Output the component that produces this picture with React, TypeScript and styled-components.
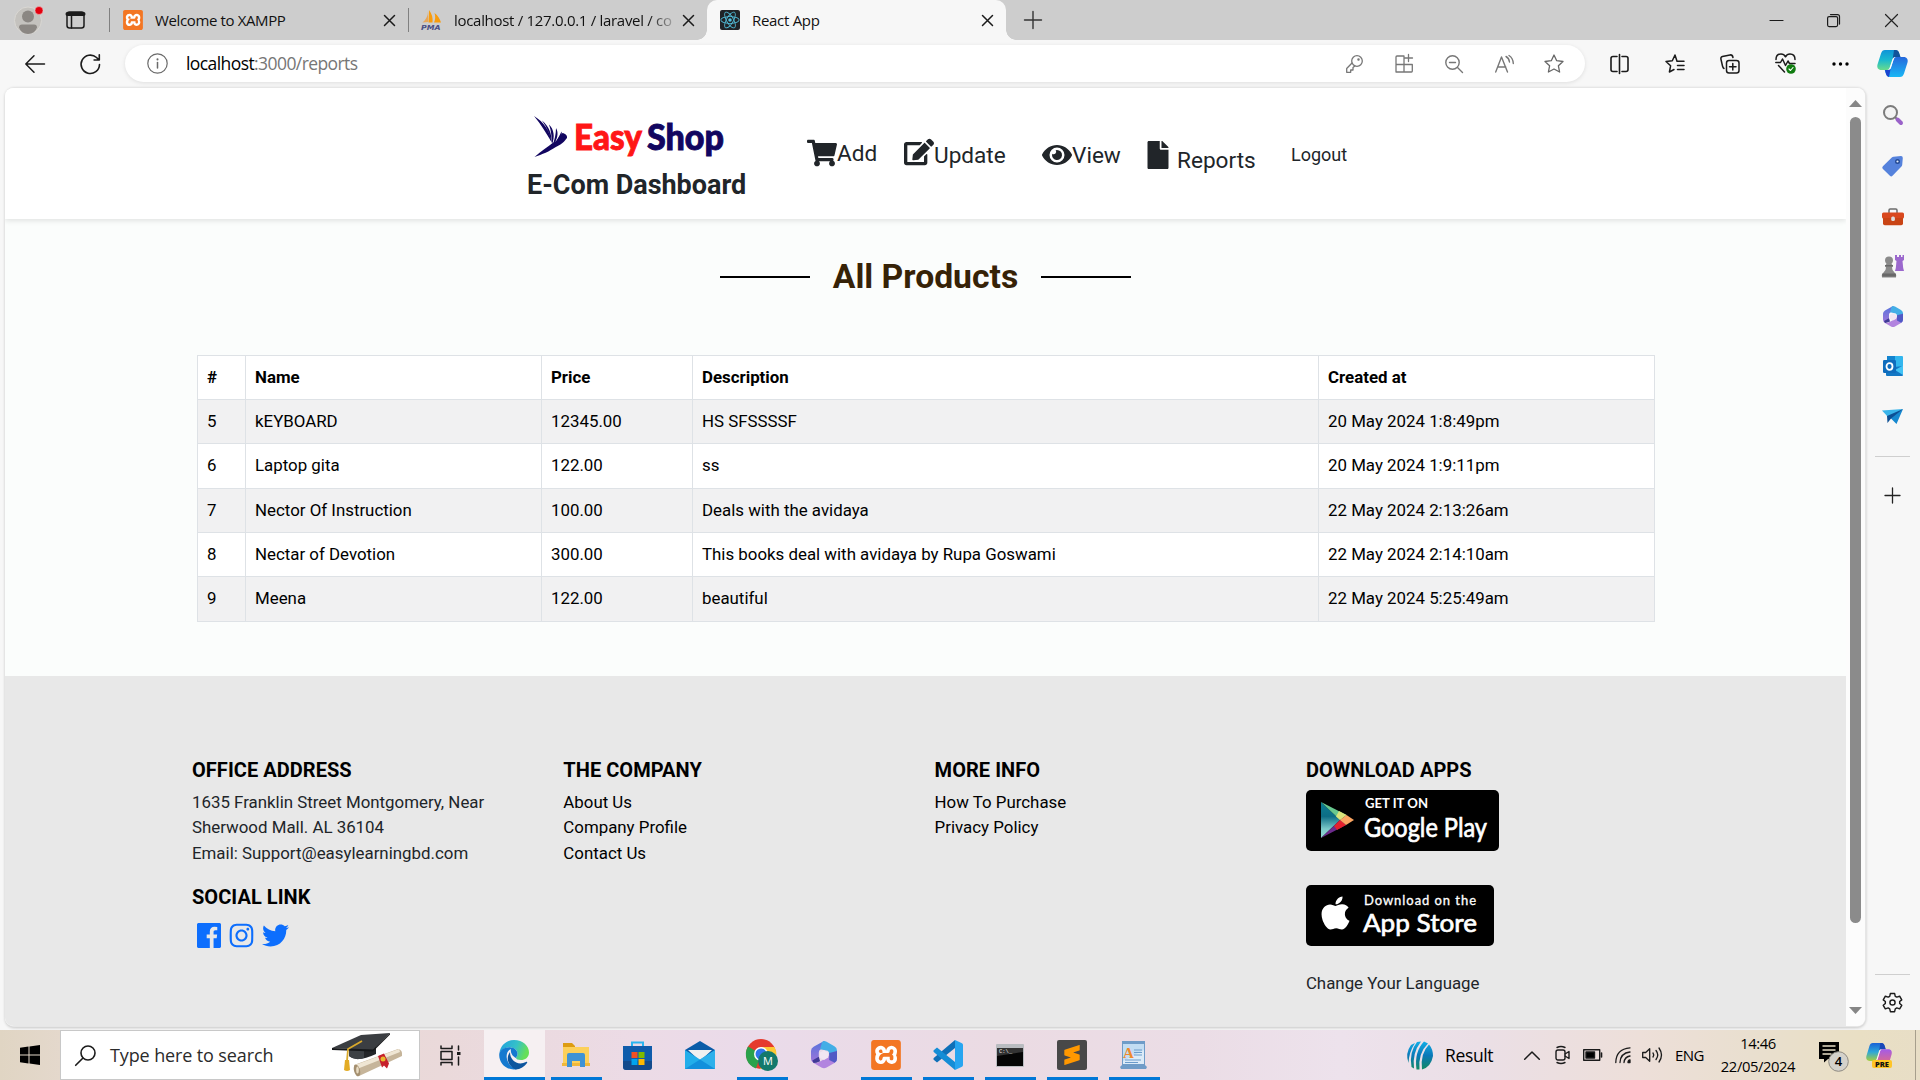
import React from "react";
import styled, { createGlobalStyle } from "styled-components";
import { FaShoppingCart, FaEdit, FaEye, FaFile, FaInstagram, FaTwitter, FaReact, FaApple } from "react-icons/fa";
import { SiXampp, SiSublimetext } from "react-icons/si";

const ui = `"Open Sans", "Noto Sans", sans-serif`;

const Global = createGlobalStyle`
  * { box-sizing: border-box; }
  body { margin: 0; background: #f7f7f7; overflow: hidden; font-family: Roboto, sans-serif; }
  svg { display: block; flex: none; overflow: visible; }
`;

const Screen = styled.div`
  width: 1920px;
  height: 1080px;
  display: flex;
  flex-direction: column;
  overflow: hidden;
  background: #f7f7f7;
`;

/* browser chrome */
const TabStrip = styled.div`
  height: 40px;
  display: flex;
  align-items: center;
  background: #cdcdcd;
`;
const Slot = styled.div<{ w: number; pl?: number; dy?: number }>`
  width: ${(p) => p.w}px;
  flex: none;
  display: flex;
  align-items: center;
  padding-left: ${(p) => p.pl || 0}px;
  margin-top: ${(p) => p.dy || 0}px;
`;
const Tab = styled.div<{ w: number; active?: boolean; pl?: number }>`
  width: ${(p) => p.w}px;
  height: 40px;
  flex: none;
  display: flex;
  align-items: center;
  padding: 0 13px 0 ${(p) => p.pl || 13}px;
  position: relative;
  background: ${(p) => (p.active ? "#f7f7f7" : "transparent")};
  border-radius: 10px 10px 0 0;
  &::before, &::after {
    content: "";
    display: ${(p) => (p.active ? "block" : "none")};
    position: absolute;
    bottom: 0;
    width: 10px;
    height: 10px;
  }
  &::before { left: -10px; background: radial-gradient(circle at 0 0, transparent 9.5px, #f7f7f7 10px); }
  &::after { right: -10px; background: radial-gradient(circle at 100% 0, transparent 9.5px, #f7f7f7 10px); }
`;
const TabTitle = styled.span<{ ls: number; fade?: boolean }>`
  flex: 1;
  min-width: 0;
  margin: -1px 8px 0 12px;
  white-space: nowrap;
  font: 15px/24px ${ui};
  letter-spacing: ${(p) => p.ls}px;
  color: #111;
  mask-image: ${(p) => (p.fade ? "linear-gradient(90deg, #000 88%, transparent 102%)" : "none")};
`;
const Divider = styled.div`
  width: 1px;
  height: 24px;
  background: #808080;
`;
const Spacer = styled.div`flex: 1;`;

const Toolbar = styled.div`
  height: 47px;
  display: flex;
  align-items: center;
`;
const AddressBar = styled.div`
  width: 1460px;
  height: 37px;
  border-radius: 19px;
  background: #fff;
  box-shadow: 0 1px 4px rgba(0, 0, 0, 0.1);
  display: flex;
  align-items: center;
  padding-left: 22px;
`;
const Url = styled.div`
  margin: -1px 0 0 18px;
  width: 1160px;
  font: 17.5px/24px ${ui};
  letter-spacing: -0.58px;
  color: #767676;
  b { font-weight: 400; color: #000; }
`;

const Middle = styled.div`
  display: flex;
  height: 943px;
  padding-left: 5px;
`;
const Frame = styled.div`
  width: 1861px;
  height: 940px;
  display: flex;
  border-radius: 9px;
  overflow: hidden;
  border: 1px solid #e6e6e6;
  border-width: 1px 1px 1px 0;
  box-shadow: 0 1px 3px rgba(0, 0, 0, 0.2);
  background: #fcfcfc;
`;
const Page = styled.div`
  width: 1841px;
  display: flex;
  flex-direction: column;
  background: #fbfdfc;
`;
const Scrollbar = styled.div`
  flex: 1;
  display: flex;
  flex-direction: column;
  align-items: center;
  background: #fcfcfc;
  padding: 12px 0 12px;
  justify-content: space-between;
`;
const Thumb = styled.div`
  width: 11px;
  height: 806px;
  margin-bottom: 75px;
  border-radius: 6px;
  background: #8b8b8b;
`;

/* site header */
const Header = styled.header`
  height: 131px;
  flex: none;
  display: flex;
  align-items: flex-start;
  padding-left: 522px;
  background: #fff;
  box-shadow: 0 2px 5px rgba(0, 0, 0, 0.1);
`;
const Brand = styled.div`
  width: 280px;
  padding-top: 28px;
`;
const BrandTitle = styled.div`
  margin-top: 9px;
  font: 700 27px/32px Roboto, sans-serif;
  letter-spacing: -0.02px;
  white-space: nowrap;
  color: #212529;
`;
const NavLink = styled.div<{ w: number; top: number }>`
  width: ${(p) => p.w}px;
  flex: none;
  padding-top: ${(p) => p.top}px;
  display: flex;
  align-items: flex-start;
  color: #212529;
`;
const NavText = styled.span<{ top?: number; ml?: number; size?: number }>`
  margin: ${(p) => p.top || 0}px 0 0 ${(p) => p.ml || 0}px;
  font-size: ${(p) => p.size || 22.6}px;
  line-height: 28px;
`;

const Title = styled.div`
  display: flex;
  justify-content: center;
  align-items: center;
  gap: 23px;
  margin-top: 35px;
  height: 46px;
`;
const Rule = styled.div`
  width: 90px;
  height: 2px;
  background: #000;
`;
const H1 = styled.h1`
  margin: 0;
  font: 700 33.7px/46px Roboto, sans-serif;
  color: #362207;
`;

const Table = styled.table`
  margin: 55px 0 0 192px;
  width: 1458px;
  table-layout: fixed;
  border-collapse: collapse;
  background: #fff;
  color: #000;
  font-size: 16.86px;
`;
const Row = styled.tr<{ h: number; striped?: boolean }>`
  height: ${(p) => p.h}px;
  background: ${(p) => (p.striped ? "#f1f1f2" : "#fff")};
`;
const Cell = styled.td`
  border: 1px solid #dee2e6;
  padding: 0 9px 2px;
  line-height: 24px;
  font-weight: inherit;
  white-space: nowrap;
  thead & { font-weight: 700; }
`;

const Footer = styled.footer`
  flex: 1;
  margin-top: 54px;
  padding: 82px 0 0 187px;
  display: grid;
  grid-template-columns: repeat(4, 371.3px);
  background: #e8e8e8;
  align-content: start;
`;
const FootHead = styled.h5`
  margin: 0 0 8px;
  font: 700 20px/24px Roboto, sans-serif;
  letter-spacing: 0.05px;
  white-space: nowrap;
  color: #000;
`;
const FootText = styled.div<{ dark?: boolean }>`
  font-size: 16.86px;
  line-height: 25.4px;
  white-space: nowrap;
  color: ${(p) => (p.dark ? "#000" : "#212529")};
`;
const Gap = styled.div<{ h: number }>`height: ${(p) => p.h}px;`;
const Social = styled.div`
  display: flex;
  align-items: center;
  gap: 7px;
  padding-left: 5px;
  color: #0d6efd;
`;

/* edge sidebar */
const Side = styled.aside`
  flex: 1;
  display: flex;
  flex-direction: column;
  align-items: center;
  padding-right: 1px;
`;
const SideItem = styled.div<{ h: number }>`
  height: ${(p) => p.h}px;
  flex: none;
  display: flex;
  align-items: center;
  justify-content: center;
`;
const SideRule = styled.div`
  width: 35px;
  height: 1px;
  background: #cfcfcf;
`;

/* taskbar */
const Taskbar = styled.div`
  height: 50px;
  display: flex;
  align-items: center;
  background: linear-gradient(90deg, #e0d5c3 0, #e4d8cc 60px, #ead9da 440px, #ecdbe6 640px, #eadbea 760px, #ebdbe3 1000px, #ebdde6 1200px, #ede2ec 1340px, #ebdfe6 1480px, #eddfd9 1640px, #e9dfcf 1750px, #e9dfc4 1860px, #e8dec6 1920px);
`;
const SearchBox = styled.div`
  width: 360px;
  height: 50px;
  display: flex;
  align-items: center;
  padding-left: 14px;
  background: #fff;
  border: 1px solid #c8c8c8;
`;
const SearchText = styled.span`
  width: 222px;
  margin-left: 14px;
  font: 18px/24px ${ui};
  letter-spacing: -0.12px;
  white-space: nowrap;
  color: #2b2b2b;
`;
const TaskApp = styled.div<{ open?: boolean; active?: boolean }>`
  width: ${(p) => (p.active ? 61 : 51)}px;
  margin-right: ${(p) => (p.active ? 6 : 11)}px;
  padding-right: 2px;
  height: 50px;
  flex: none;
  display: flex;
  align-items: center;
  justify-content: center;
  background: ${(p) => (p.active ? "#f6f0f2" : "transparent")};
  border-bottom: 3px solid ${(p) => (p.open ? "#0078d7" : "transparent")};
  border-top: 3px solid ${(p) => (p.active ? "#f6f0f2" : "transparent")};
`;
const TrayText = styled.span<{ size: number; ls: number }>`
  font: ${(p) => p.size}px/24px ${ui};
  letter-spacing: ${(p) => p.ls}px;
  white-space: nowrap;
  color: #000;
`;
const Clock = styled.div`
  width: 96px;
  text-align: center;
  font: 14.8px/22.5px ${ui};
  letter-spacing: -0.42px;
  margin-top: -1px;
  color: #000;
`;

type IconProps = { w: number; h: number; vb?: string; sw?: number; c?: string; children: React.ReactNode };
const Line = ({ w, h, vb, sw = 1.4, c = "#1b1b1b", children }: IconProps) => (
  <svg width={w} height={h} viewBox={vb || `0 0 ${w} ${h}`} fill="none" stroke={c} strokeWidth={sw} strokeLinecap="round" strokeLinejoin="round">
    {children}
  </svg>
);
const Close = ({ s = 11 }: { s?: number }) => (
  <Line w={s} h={s} vb="0 0 11 11" sw={1.5}><path d="M.5.5l10 10M10.500.5l-10 10" /></Line>
);

const Xampp = ({ s, h }: { s: number; h?: number }) => (
  <svg width={s} height={h || s} viewBox="0 0 24 24" preserveAspectRatio="none">
    <rect x="1" y="1" width="22" height="22" rx="2" fill="#fff" />
    <SiXampp size={24} color="#f37623" />
  </svg>
);

const Pma = () => (
  <svg width="21" height="20" viewBox="0 0 21 20">
    <path d="M7 1.500C7 6 5 9.500 1.500 12.500L7 12z" fill="#e8a75a" />
    <path d="M8 0c3 4 4 8 3.500 12.500L7.500 12.500z" fill="#f89c0e" />
    <path d="M13.500 3c3.500 2.500 5.500 6 6.500 9.500H13c1.500-3 1.500-6.500.5-9.500z" fill="#f89c0e" />
    <text x="0" y="19.500" fontFamily="DejaVu Sans, sans-serif" fontWeight="700" fontStyle="italic" fontSize="7" textLength="19.500" lengthAdjust="spacingAndGlyphs" fill="#4a4f86">PMA</text>
  </svg>
);

const Copilot = ({ pre }: { pre?: boolean }) => {
  const k = pre ? "p" : "c";
  return (
    <svg width={pre ? 26 : 31} height={pre ? 25 : 27} viewBox={pre ? "0 0 26 25" : "0 0 31 27"}>
      <defs>
        <linearGradient id={k + "1"} x1="0" y1="0" x2="0" y2="1">
          <stop offset="0" stopColor={pre ? "#1a62d6" : "#0f94d8"} />
          <stop offset=".5" stopColor={pre ? "#2da7d8" : "#1ab9cf"} />
          <stop offset="1" stopColor={pre ? "#a8cf3c" : "#69dc8c"} />
        </linearGradient>
        <linearGradient id={k + "2"} x1="0" y1="0" x2="0" y2="1">
          <stop offset="0" stopColor={pre ? "#a35be8" : "#2568dc"} />
          <stop offset="1" stopColor={pre ? "#f3706a" : "#1ab8f5"} />
        </linearGradient>
      </defs>
      <g transform={pre ? "scale(.84 .9)" : undefined}>
        <path d="M8 0h10c2.500 0 3.500 1.500 4.300 4l1 3h-5c-2 0-2.600 1-3 2.500l-2.600 8C12 19.500 11 20 9 20H4.500C1 20-.3 17.500.5 14.500L4 3.500C4.800 1 6 0 8 0z" fill={`url(#${k}1)`} />
        <path d="M17 0h1.500c2.500 0 3.300 1.500 4 4l1 3h-5c-1.500 0-2.400.8-2.800 2z" fill={pre ? "#1947b8" : "#12539a"} />
        <path d="M23 27H13c-2.500 0-3.500-1.500-4.300-4l-1-3H10c2 0 3.200-.6 3.800-2.500l2.600-8C17 7.500 18 7 20 7h6.500c3.500 0 4.800 2.500 4 5.500L27 23.500c-.8 2.500-2 3.500-4 3.500z" fill={`url(#${k}2)`} />
        <path d="M8 20h2.500c1.700 0 2.700-.7 3.300-2.300L12 27c-2-.2-2.600-1.700-3.300-4z" fill={pre ? "#ffc41f" : "#1b44cf"} />
        <path d="M12.800 18l3-8.500c.4-1.500 1-2.500 2.800-2.500-1 .6-1.500 1.300-1.900 2.500l-2.600 8C13.600 19.300 12.500 20 11 20c1 0 1.500-1 1.800-2z" fill="#fff" />
      </g>
      {pre && (
        <>
          <rect x="6" y="17" width="20" height="8" rx="2" fill="#ffc526" />
          <text x="9" y="23.700" fontFamily="Open Sans, sans-serif" fontWeight="800" fontSize="7.500" textLength="14" lengthAdjust="spacingAndGlyphs" fill="#111">PRE</text>
        </>
      )}
    </svg>
  );
};

const M365 = ({ s, id }: { s: number; id: string }) => (
  <svg width={s} height={s * 1.07} viewBox="0 0 20 22" preserveAspectRatio="none">
    <defs>
      <linearGradient id={id} x1="0" y1="0" x2="0" y2="1"><stop offset="0" stopColor="#5573dc" /><stop offset="1" stopColor="#a276da" /></linearGradient>
    </defs>
    <path d="M10 0 2 4.500Q0 5.700 0 8v6q0 2.300 2 3.500L6 15V9q0-1.500 1.200-2.200L13 3.500z" fill={`url(#${id})`} />
    <path d="M10 0q1 0 2 .6l6 3.500q2 1.200 2 3.400V14q0 2-1.800 3L14 14.500V10q0-1.500-1.200-2.200L7 6.500 8.500 1Q9 .3 10 0z" fill="#43aee6" />
    <path d="M20 8v6q0 2.300-2 3.500L12 21q-2 1.200-4 0l-6-3.500q3 0 5-1.300l5.500-3.200Q14 12 14 10.500z" fill="#b284df" />
    <path d="M14 9.500 20 8v6q0 2-1.800 3.200L14 15z" fill="#5159c5" />
    <path d="M2 17.500Q4 17.500 7 16l-1-3.500-5 3z" fill="#403a96" />
    <path d="M10 7.300l3.300 1.900v3.800L10 15l-3.300-2V9.200z" fill="#f1e6f2" />
  </svg>
);

const Arrow = ({ up }: { up?: boolean }) => (
  <svg width="13" height="7" viewBox="0 0 13 7"><path d={up ? "M0 7 6.500 0 13 7z" : "M0 0 6.500 7 13 0z"} fill="#868686" /></svg>
);

const Logo = () => (
  <svg width="192" height="44" viewBox="0 0 192 44">
    <g fill="#120660">
      <path d="M7 0C17 6 23 15 24.500 26 19 17 14 8 7 0z" />
      <path d="M15 4.500c7 6 10 13 9.500 22.500C23 19 20 11 15 4.500z" />
      <path d="M22 8.500c5 5 6 12 3 20-.3-7-.7-14-3-20z" />
      <path d="M29 12c3 5 1.500 12-3.500 17.500C27.500 24 29 18 29 12z" />
      <path d="M34.500 15.500c1.500 5-3 10-8 14 3-4 5.500-9 8-14z" />
      <path d="M40 21.500c-2 4.500-7 7.500-12 10C23 35 15 38.500 7.500 41c7-6 13-10 17.500-13.500 4-3 9-5 15-6z" />
      <path d="M35.500 17c3 .5 5 2.500 4.500 5-4 2-8 3.500-13 7.500 2-5 5-9 8.500-12.500z" />
    </g>
    <text x="47" y="33.500" fontFamily="Lato, sans-serif" fontWeight="900" fontSize="35.500" textLength="68" lengthAdjust="spacingAndGlyphs" fill="#ff1616" stroke="#ff1616" strokeWidth=".9">Easy</text>
    <text x="120" y="33.500" fontFamily="Lato, sans-serif" fontWeight="900" fontSize="35.500" textLength="77" lengthAdjust="spacingAndGlyphs" fill="#120660" stroke="#120660" strokeWidth=".9">Shop</text>
  </svg>
);

const GooglePlay = () => (
  <svg width="193" height="61" viewBox="0 0 193 61">
    <defs><linearGradient id="gp" x1="0" y1="0" x2="0" y2="1"><stop offset="0" stopColor="#0b7e93" /><stop offset=".4" stopColor="#0d6d85" /><stop offset=".75" stopColor="#7ccac9" /><stop offset="1" stopColor="#8fd6d0" /></linearGradient></defs>
    <rect width="193" height="61" rx="5" />
    <path d="M15 12v36l19-18z" fill="url(#gp)" />
    <path d="M15 12l25.500 13L34 30z" fill="#68c88f" />
    <path d="M33 21l7.500 4L34 30l-4-3.500z" fill="#d9e37a" />
    <path d="M15 48l25-13-6-5z" fill="#6c2b8c" />
    <path d="M31 40l9-5-6-5-6 6z" fill="#e5202d" />
    <path d="M40.500 25 48 30l-8 5-6-5z" fill="#fba562" />
    <g fill="#fff" fontFamily="Lato, sans-serif">
      <text x="59" y="18" fontWeight="700" fontSize="12.500" textLength="63" lengthAdjust="spacingAndGlyphs">GET IT ON</text>
      <text x="58" y="46.500" fontSize="26.500" textLength="123" lengthAdjust="spacingAndGlyphs" stroke="#fff" strokeWidth=".7">Google Play</text>
    </g>
  </svg>
);
const AppStore = () => (
  <svg width="188" height="61" viewBox="0 0 188 61">
    <rect width="188" height="61" rx="5" />
    <g transform="translate(10.500 9)"><FaApple size={38} color="#fff" /></g>
    <g fill="#fff" fontFamily="Lato, sans-serif">
      <text x="58" y="20" fontSize="13" textLength="112" stroke="#fff" strokeWidth=".3">Download on the</text>
      <text x="57" y="46.500" fontSize="25.500" textLength="114" lengthAdjust="spacingAndGlyphs" stroke="#fff" strokeWidth=".7">App Store</text>
    </g>
  </svg>
);

const products = [
  ["5", "kEYBOARD", "12345.00", "HS SFSSSSF", "20 May 2024 1:8:49pm"],
  ["6", "Laptop gita", "122.00", "ss", "20 May 2024 1:9:11pm"],
  ["7", "Nector Of Instruction", "100.00", "Deals with the avidaya", "22 May 2024 2:13:26am"],
  ["8", "Nectar of Devotion", "300.00", "This books deal with avidaya by Rupa Goswami", "22 May 2024 2:14:10am"],
  ["9", "Meena", "122.00", "beautiful", "22 May 2024 5:25:49am"],
];
const rowHeights = [44, 45, 44, 44, 45];
const star = "M10 1l2.700 5.700 6.300.8-4.600 4.300 1.200 6.200L10 15l-5.600 3 1.200-6.200L1 7.500l6.300-.8z";

const Tabs = () => (
  <TabStrip>
    <Slot w={66} pl={14}>
      <svg width="29" height="29" viewBox="0 0 29 29">
        <circle cx="14" cy="14.500" r="13.500" fill="#c4c2be" stroke="#dad8d4" />
        <circle cx="14" cy="10.500" r="6" fill="#8b8783" />
        <path d="M5 21.500q0-3 3-3h12q3 0 3 3-2 6-9 6.500-7-.5-9-6.500z" fill="#8b8783" />
        <circle cx="25" cy="4.500" r="4" fill="#e3000f" stroke="#f4cccc" strokeWidth=".5" />
      </svg>
    </Slot>
    <Slot w={43}>
      <Line w={19} h={18} sw={1.5}><rect x="1" y="1" width="17" height="16" rx="2.500" /><path d="M1.500 3h16" strokeWidth="4" /><path d="M5.500 4v13" /></Line>
    </Slot>
    <Divider />
    <Tab w={298}><Xampp s={20} /><TabTitle ls={-0.37}>Welcome to XAMPP</TabTitle><Close /></Tab>
    <Divider />
    <Tab w={298} pl={12}><Pma /><TabTitle ls={-0.3} fade>localhost / 127.0.0.1 / laravel / co</TabTitle><Close /></Tab>
    <Tab w={299} active>
      <svg width="20" height="20" viewBox="0 0 20 20"><rect width="20" height="20" rx="2" fill="#202327" /><g transform="translate(.5 .5)"><FaReact size={19} color="#53c1de" /></g></svg>
      <TabTitle ls={-0.3}>React App</TabTitle><Close />
    </Tab>
    <Slot w={100} pl={18}><Line w={18} h={18} c="#333"><path d="M9 .5v17M.5 9h17" /></Line></Slot>
    <Spacer />
    <Slot w={57}><Line w={13} h={13} sw={1.2}><path d="M0 6.500h13" /></Line></Slot>
    <Slot w={58}><Line w={13} h={13} sw={1.2}><rect x=".6" y="2.600" width="10" height="10" rx="1.500" /><path d="M3.500.6h7q2 0 2 2v7.500" /></Line></Slot>
    <Slot w={35}><Line w={13} h={13} sw={1.2} c="#222"><path d="M.5.5l12 12M12.500.5l-12 12" /></Line></Slot>
  </TabStrip>
);

const Tools = () => (
  <Toolbar>
    <Slot w={79} pl={25}><Line w={20} h={18} sw={1.5}><path d="M19.500 9H.8M9 .8.800 9 9 17.200" /></Line></Slot>
    <Slot w={46} pl={1}><Line w={21} h={20} sw={1.6}><path d="M19.500 10.500a9.200 9.200 0 1 1-3-7l2.500 2.400M19.300.8v5.200h-5.200" /></Line></Slot>
    <AddressBar>
      <Line w={21} h={21} sw={1.2} c="#6a6a6a"><circle cx="10.500" cy="10.500" r="9.700" /><path d="M10.500 9.500v5.500" strokeWidth="1.500" /><path d="M10.500 6.300v.2" strokeWidth="2" /></Line>
      <Url><b>localhost</b>:3000/reports</Url>
      <Slot w={49}><Line w={17} h={18} c="#777" sw={1.3}><circle cx="11" cy="6" r="5.300" /><path d="M6 8 .7 13.500v3.800h4V15h2.300v-2.400l1.800-1.600" /><circle cx="12.500" cy="4.600" r=".6" fill="#777" /></Line></Slot>
      <Slot w={50}><Line w={18} h={19} c="#777" sw={1.3}><path d="M1 18h15.500q.8 0 .8-1v-6.500H1zM1 10.500V3q0-1 1-1h7v16M13.500.5v7M10 4h7.500" /></Line></Slot>
      <Slot w={50}><Line w={18} h={18} c="#777" sw={1.4}><circle cx="7.500" cy="7.500" r="6.700" /><path d="M12.500 12.500l5 5M4.500 7.500h6" /></Line></Slot>
      <Slot w={49}><Line w={19} h={18} c="#777" sw={1.4}><path d="M.7 17 6.500 2l6 15M2.800 12h8M11 1.500q3 1.500 3.500 5.500M14 .5q4 2.500 4.300 8" /></Line></Slot>
      <Slot w={30}><Line w={20} h={19} c="#666" sw={1.3}><path d={star} /></Line></Slot>
    </AddressBar>
    <Slot w={80} pl={25}><Line w={19} h={20} sw={1.6}><path d="M7 2.500H3q-2 0-2 2v11q0 2 2 2h4M12 2.500h4q2 0 2 2v11q0 2-2 2h-4M9.500.5v19" /></Line></Slot>
    <Slot w={55}><Line w={20} h={19} sw={1.5}><path d="M12 7.200 10 1 7.300 6.700 1 7.500l4.600 4.300L4.400 18l4.600-2.500M12.500 7.200H19M12.500 11.500H19M12.500 15.500H19" /></Line></Slot>
    <Slot w={55}><Line w={20} h={20} sw={1.5}><rect x="6.500" y="6.500" width="12.500" height="12.500" rx="2.500" /><path d="M12.800 9.500v6.500M9.500 12.800H16M4 14.500Q3 14 2.500 12L.9 5q-.3-2 1.500-2.500L10 .9q2.500-.3 3 2.600" /></Line></Slot>
    <Slot w={57}>
      <Line w={22} h={21} sw={1.5}><path d="M1 6.500Q1 1 6 1q3 0 4.500 2.800Q12 1 15 1q5 0 5 5.500M.8 9.500h4.700L7.500 6l3 6.500L13 8l1.500 2.500H20M3.500 12.500l6 6.500" /><circle cx="16" cy="16" r="4.800" fill="#107c10" stroke="none" /><path d="M14 16l1.500 1.500 2.500-3" stroke="#fff" strokeWidth="1.100" /></Line>
    </Slot>
    <Slot w={45}><svg width="17" height="4" viewBox="0 0 17 4"><circle cx="2" cy="2" r="1.700" /><circle cx="8.500" cy="2" r="1.700" /><circle cx="15" cy="2" r="1.700" /></svg></Slot>
    <Slot w={40}><Copilot /></Slot>
  </Toolbar>
);

const EdgeSide = () => (
  <Side>
    <Gap h={3} />
    <SideItem h={50}><svg width="20" height="20" viewBox="0 0 20 20"><circle cx="7.500" cy="7.500" r="6.500" fill="#f3f3f3" stroke="#7b7b7b" strokeWidth="2" /><path d="M12 12l2 2" stroke="#777" strokeWidth="2" /><path d="M14.500 14.500l3.500 3.500" stroke="#9a62c9" strokeWidth="4" strokeLinecap="round" /></svg></SideItem>
    <SideItem h={52}><svg width="21" height="21" viewBox="0 0 21 21"><path d="M11.500.8 19 0q1.800 0 1.800 2l-.6 7q-.2 1-1 1.800l-8.700 9q-1.300 1.200-2.600 0L.7 12.700q-1-1.300.2-2.500L9.800 1.500q.7-.6 1.700-.7z" fill="#5582dc" /><circle cx="15.500" cy="5.500" r="1.800" fill="#dfe9fb" stroke="#244a94" strokeWidth="1.400" /></svg></SideItem>
    <SideItem h={50}><svg width="22" height="18" viewBox="0 0 22 18"><path d="M7 5V2.200Q7 1 8.200 1h5.600Q15 1 15 2.200V5" fill="none" stroke="#6c6c6c" strokeWidth="1.500" /><rect y="4.500" width="22" height="6" rx="1.500" fill="#d9481e" /><path d="M1 10h20v5.500q0 1.800-1.800 1.800H2.800Q1 17.300 1 15.500z" fill="#c94415" /><rect x="9.200" y="8.500" width="3.700" height="4.500" rx="1.500" fill="#ddd" /></svg></SideItem>
    <SideItem h={49}><svg width="22" height="23" viewBox="0 0 22 23"><path d="M13 0h2v2h2V0h2v2h1.500V0H22v5l-1.500 1 .7 7 .8 3h-9l.8-3 .7-7L13 5z" fill="#9b68cd" /><path d="M3 5.500a4 4 0 0 1 8 0q0 2-1.500 3.200L11 11l-1 1.500q0 3 2.500 5 2 1.500 1.500 5H0q-.5-3.500 1.500-5Q4 15.500 4 12.500L3 11l1.500-2.300Q3 7.500 3 5.500z" fill="#8a8a8a" /><path d="M.2 18.500h13.700v3H.2zM3 10h8v1.500H3z" fill="#696969" /></svg></SideItem>
    <SideItem h={51}><M365 s={20} id="m1" /></SideItem>
    <SideItem h={48}><svg width="20" height="20" viewBox="0 0 20 20"><rect x="4" y="0" width="16" height="16" rx="1" fill="#32b6ee" /><path d="M4 0h8v8H4z" fill="#1384cf" /><path d="M3 12l17-2v9q0 1-1 1H4q-1 0-1-1z" fill="#1377c4" /><path d="M20 9.500V19L12 14z" fill="#42c3f5" /><rect x="0" y="4" width="13" height="13" rx="1.200" fill="#0f6cbd" /><ellipse cx="6.500" cy="10.500" rx="3" ry="3.300" fill="none" stroke="#fff" strokeWidth="1.800" /></svg></SideItem>
    <SideItem h={52}><svg width="21" height="15" viewBox="0 0 21 15"><path d="M0 1.500 21 0 6 8z" fill="#39b4ea" /><path d="M6 8 21 0l-6.500 15L9 9.500z" fill="#1688cf" /><path d="M5 7 21 0 9 9.500 5.500 14z" fill="#0c4f94" /></svg></SideItem>
    <Gap h={14} />
    <SideRule />
    <Gap h={31} />
    <Line w={15} h={15} sw={1.3} c="#222"><path d="M7.500 0v15M0 7.500h15" /></Line>
    <Spacer />
    <SideRule />
    <Gap h={17} />
    <Line w={21} h={21} vb="0 0 22 22" sw={1.5}><path d="M8.800 1.500h4.400l.7 3 1.600.9 3-1 2.200 3.800L18.500 10v2l2.200 1.900-2.200 3.800-3-1-1.600.9-.7 3H8.800l-.7-3-1.600-.9-3 1-2.200-3.800L3.500 12v-2L1.300 8.200l2.200-3.800 3 1 1.600-.9z" /><circle cx="11" cy="11" r="2.700" /></Line>
    <Gap h={17} />
  </Side>
);

const Tasks = () => (
  <Taskbar>
    <Slot w={60} pl={20}><svg width="20" height="20" viewBox="0 0 20 20"><path d="M0 2.800 8.500 1.600v7.900H0zM9.500 1.400 20 0v9.500H9.500zM0 10.500h8.500v7.900L0 17.200zM9.500 10.500H20V20L9.500 18.600z" /></svg></Slot>
    <SearchBox>
      <Line w={21} h={21} sw={1.6}><circle cx="13" cy="8" r="7" /><path d="M8 13l-7.300 7.300" /></Line>
      <SearchText>Type here to search</SearchText>
      <svg width="71" height="44" viewBox="0 0 71 44">
        <path d="M17 10v13q8 7 27-2V6z" fill="#242629" />
        <path d="M17 12v11q6 5 15 2V12z" fill="#3d4145" />
        <path d="M0 15 29 2 58 0 41 17z" fill="#3b3e42" /><path d="M0 15l41 1.500L58 0v1.500L41 18.500 0 17z" fill="#17191b" />
        <path d="M30 8 16 16l-1 12" fill="none" stroke="#d9a92b" strokeWidth="1.800" />
        <path d="M13 27h4l1 10q-3 2-6 0z" fill="#e3ac26" />
        <path d="M22 32 66 16q5 1 4 7L27 43q-5-2-5-11z" fill="#c6b59a" /><path d="M23 32 67 16l1 3-43 17z" fill="#efe6d4" />
        <ellipse cx="25" cy="37.500" rx="3" ry="6" transform="rotate(-15 25 37.500)" fill="#a48f70" /><ellipse cx="25.500" cy="37" rx="1.300" ry="3.500" fill="#e9dcc3" />
        <path d="M46 23l6-2.500 5 10-2 5-3-3-2 2z" fill="#c6202c" /><circle cx="51" cy="26" r="2.500" fill="#e9b92f" />
      </svg>
    </SearchBox>
    <Slot w={64} pl={20}><Line w={21} h={19} sw={1.5}><path d="M1 0v2.500h11V0M1 19v-2.500h11V19M1 5.500h11v8H1zM18.500 0v4M18.500 11v8" /><path d="M17 7.500h3.500" strokeWidth="3" strokeLinecap="butt" /></Line></Slot>
    <TaskApp active open>
      <svg width="30" height="30" viewBox="0 0 30 30">
        <defs><linearGradient id="e1" x1="0" y1="0" x2="1" y2=".3"><stop offset="0" stopColor="#1f9fe0" /><stop offset=".6" stopColor="#35c1c8" /><stop offset="1" stopColor="#66df58" /></linearGradient></defs>
        <path d="M.5 13C1.500 5 8 0 15 0c9 0 15 6 15 12.500 0 5-4 7.500-8 7.500-3 0-5-1-5-2 0-1 1.500-1.500 1.500-4.500C18.500 10 15 7.500 11 7.500 6 7.500 2 9.500.5 13z" fill="url(#e1)" />
        <path d="M.2 15C.2 10 5 7.200 10.500 7.200c4.500 0 8 3 8 6.300 0 3-1.500 3.500-1.500 4.500-3-1-6-5-5-9-4 1.500-5 6-4 10 1.500 6 6 10 12 9.500C10 32 .2 25 .2 15z" fill="#1579cf" />
        <path d="M11 12c-5 7-1 14 5.500 17.500 5 0 9-3 11.500-6.500.8-1-.2-1.500-1-1C19 26 11 21 11 12z" fill="#0d559e" />
      </svg>
    </TaskApp>
    <TaskApp open><svg width="28" height="24" viewBox="0 0 28 24"><path d="M1 0h9l3 3v4H1z" fill="#dd9c12" /><path d="M1 4h26v19H1z" fill="#fcd05a" /><path d="M0 20h28v3H0z" fill="#f0b83c" /><path d="M5 12q0-2 2-2h14q2 0 2 2v12h-5v-6h-8v6H5z" fill="#3f93d5" /></svg></TaskApp>
    <TaskApp><svg width="29" height="29" viewBox="0 0 29 29"><path d="M9 6V1.500h11V6" fill="none" stroke="#2ab5ef" strokeWidth="2" /><path d="M0 5h29v21q0 3-3 3H3q-3 0-3-3z" fill="#0f5cab" /><path d="M0 20h29v6q0 3-3 3H3q-3 0-3-3z" fill="#173f78" opacity=".6" /><path d="M8.500 11h6v6h-6z" fill="#f25022" /><path d="M15.500 11h6v6h-6z" fill="#7fba00" /><path d="M8.500 18h6v6h-6z" fill="#00a4ef" /><path d="M15.500 18h6v6h-6z" fill="#ffb900" /></svg></TaskApp>
    <TaskApp><svg width="30" height="28" viewBox="0 0 30 28"><path d="M0 9 15 0l15 9v8H0z" fill="#0a5ca8" /><path d="M3 9h24L15 20z" fill="#f0f0f0" /><path d="M0 9l30 19H0z" fill="#22aeea" /><path d="M30 9v19H0z" fill="#1290dc" /><path d="M15 18.500 30 9v19z" fill="#3cc2f3" opacity=".65" /></svg></TaskApp>
    <TaskApp open><svg width="32" height="32" viewBox="0 0 32 32"><circle cx="15" cy="15" r="15" fill="#e53b2e" /><path d="M2 7.500 15 15l-5 14.500A15 15 0 0 1 2 7.500z" fill="#2aa24b" /><path d="M15 8h13.500A15 15 0 0 1 14 30l7-12z" fill="#fcc934" /><circle cx="15" cy="15" r="7" fill="#fff" /><circle cx="15" cy="15" r="5.500" fill="#2f76e8" /><circle cx="22" cy="22" r="10" fill="#12796c" /><text x="22" y="26" textAnchor="middle" fontFamily="Open Sans, sans-serif" fontSize="11" fill="#fff">M</text></svg></TaskApp>
    <TaskApp><M365 s={26} id="m2" /></TaskApp>
    <TaskApp open><Xampp s={30} /></TaskApp>
    <TaskApp open><svg width="30" height="30" viewBox="0 0 30 30"><path d="M22 0v8L4 22.500 1 20q-1.500-1 0-2.300z" fill="#0f70b8" /><path d="M22 30v-8L4 7.500 1 10q-1.500 1 0 2.300z" fill="#148dd6" /><path d="M22 0l7 3.300q1 .5 1 1.700v20q0 1.200-1 1.700L22 30z" fill="#27a5f0" /></svg></TaskApp>
    <TaskApp open><svg width="28" height="23" viewBox="0 0 28 23"><rect width="28" height="23" rx="1" fill="#b9bcc0" /><path d="M1 4h26v18H1z" fill="#050505" /><path d="M1 4h26v4L1 12z" fill="#333" /><text x="3" y="9" fontFamily="Liberation Mono, monospace" fontSize="5.500" fill="#eee">C:\_</text></svg></TaskApp>
    <TaskApp open><svg width="30" height="30" viewBox="0 0 30 30"><rect width="30" height="30" rx="2" fill="#484848" /><g transform="translate(5 5)"><SiSublimetext size={20} color="#ff9800" /></g></svg></TaskApp>
    <TaskApp open><svg width="27" height="28" viewBox="0 0 27 28"><path d="M2 0h23v24l2 2-1 2H1l-1-2 2-2z" fill="#6f9cc8" /><path d="M3 3h21v20H3z" fill="#dcebf8" /><path d="M3 3h21v6L3 20z" fill="#c2ddf3" /><path d="M14 9h8M14 11.500h8M14 14h8M5 19h16M5 21.500h13" stroke="#6a9bcb" /><text x="3" y="17" fontFamily="Liberation Serif, serif" fontWeight="700" fontSize="15" fill="#ef8a2c">A</text></svg></TaskApp>
    <Spacer />
    <Slot w={38}>
      <svg width="26" height="29" viewBox="0 0 26 29"><defs><linearGradient id="ic" x1="0" y1="0" x2="0" y2="1"><stop offset="0" stopColor="#12aee6" /><stop offset=".5" stopColor="#0b78b8" /><stop offset="1" stopColor="#138a62" /></linearGradient></defs><path d="M4 4Q-2 12 1.500 22 2 11 8 2zM10 1Q2 11 4.500 26l2.500 1.500Q5 12 14 .5zM17 .5Q7 11 9.500 28.500h3Q11 12 21 2.500zM22 3.500q-9 9-7 25Q24 26 26 15q0-7-4-11.500z" fill="url(#ic)" /></svg>
    </Slot>
    <Slot w={79}><TrayText size={17.5} ls={-0.35}>Result</TrayText></Slot>
    <Slot w={31}><Line w={16} h={9} sw={1.5}><path d="M.7 8.300 8 1l7.300 7.300" /></Line></Slot>
    <Slot w={28}><Line w={15} h={18} sw={1.4}><rect x="1" y="4" width="9" height="10" rx="2" /><path d="M10 8l4-2.500v7L10 10M2 1.500q4-2 8 0M2 16.500q4 2 8 0" /></Line></Slot>
    <Slot w={32}><Line w={19} h={12} sw={1.4}><rect x=".7" y=".7" width="16" height="10.600" /><path d="M3 3h8.500v6H3z" fill="#000" /><path d="M18.500 4v4" strokeWidth="1.600" /></Line></Slot>
    <Slot w={27}><Line w={16} h={16} sw={1.3}><path d="M.8 15.500Q1 2 15 .8M5 15.500Q5.500 6 15 5M9 15.500Q9.500 10 15 9" /><path d="M13 15.500q0-2.500 2-2.700v2.700z" fill="#000" /></Line></Slot>
    <Slot w={33}><Line w={20} h={16} sw={1.3}><path d="M.7 5.500v5h3l4 3.800V1.700l-4 3.800zM11 6q1.500 2 0 4M14 3.500q3.500 4.500 0 9M17 1q5 7 0 14" /></Line></Slot>
    <Slot w={35}><TrayText size={15} ls={-0.55}>ENG</TrayText></Slot>
    <Clock>14:46<br />22/05/2024</Clock>
    <Slot w={60} pl={13} dy={4}><svg width="30" height="30" viewBox="0 0 30 30"><path d="M0 0h20v17H9l-4 3.500V17H0z" /><path d="M3.500 4h13M3.500 8h13M3.500 12h9" stroke="#e8dec6" strokeWidth="1.300" /><circle cx="19.500" cy="19.500" r="9.800" fill="#d4d1ca" stroke="#8f8b82" /><text x="19.500" y="24.300" textAnchor="middle" fontFamily="Open Sans, sans-serif" fontWeight="600" fontSize="13">4</text></svg></Slot>
    <Slot w={49}><Copilot pre /></Slot>
    <Slot w={5}><svg width="1" height="50" viewBox="0 0 1 50"><path d="M0 0h1v50H0z" fill="#a79f8d" /></svg></Slot>
  </Taskbar>
);

export default function App() {
  return (
    <Screen>
      <Global />
      <Tabs />
      <Tools />
      <Middle>
        <Frame>
          <Page>
            <Header>
              <Brand>
                <Logo />
                <BrandTitle>E-Com Dashboard</BrandTitle>
              </Brand>
              <NavLink w={97} top={50}><FaShoppingCart size={30} /><NavText top={2}>Add</NavText></NavLink>
              <NavLink w={138} top={49}><FaEdit size={30} /><NavText top={5}>Update</NavText></NavLink>
              <NavLink w={102} top={52}><FaEye size={30} /><NavText top={2}>View</NavText></NavLink>
              <NavLink w={147} top={53}><FaFile size={28} /><NavText top={6} ml={5}>Reports</NavText></NavLink>
              <NavLink w={80} top={53}><NavText size={18}>Logout</NavText></NavLink>
            </Header>
            <Title><Rule /><H1>All Products</H1><Rule /></Title>
            <Table>
              <colgroup><col width="48" /><col width="296" /><col width="151" /><col width="626" /><col width="336" /></colgroup>
              <thead><Row h={44}>{["#", "Name", "Price", "Description", "Created at"].map((t) => <Cell key={t}>{t}</Cell>)}</Row></thead>
              <tbody>
                {products.map((r, i) => (
                  <Row key={r[0]} h={rowHeights[i]} striped={i % 2 === 0}>{r.map((c, j) => <Cell key={j}>{c}</Cell>)}</Row>
                ))}
              </tbody>
            </Table>
            <Footer>
              <div>
                <FootHead>OFFICE ADDRESS</FootHead>
                <FootText>1635 Franklin Street Montgomery, Near</FootText>
                <FootText>Sherwood Mall. AL 36104</FootText>
                <FootText>Email: Support@easylearningbd.com</FootText>
                <Gap h={18.6} />
                <FootHead>SOCIAL LINK</FootHead>
                <Gap h={5} />
                <Social>
                  <svg width="24" height="25" viewBox="0 128 1536 1536" preserveAspectRatio="none" fill="currentColor"><path d="M1451 128q35 0 60 25t25 60v1366q0 35-25 60t-60 25h-391v-595h199l30-232h-229v-148q0-56 23.500-84t91.500-28l122-1v-207q-63-9-178-9-136 0-217.500 80t-81.500 226v171h-200v232h200v595h-735q-35 0-60-25t-25-60v-1366q0-35 25-60t60-25h1366z" /></svg>
                  <FaInstagram size={27} />
                  <FaTwitter size={27} />
                </Social>
              </div>
              <div>
                <FootHead>THE COMPANY</FootHead>
                <FootText dark>About Us</FootText>
                <FootText dark>Company Profile</FootText>
                <FootText dark>Contact Us</FootText>
              </div>
              <div>
                <FootHead>MORE INFO</FootHead>
                <FootText dark>How To Purchase</FootText>
                <FootText dark>Privacy Policy</FootText>
              </div>
              <div>
                <FootHead>DOWNLOAD APPS</FootHead>
                <GooglePlay />
                <Gap h={34} />
                <AppStore />
                <Gap h={25} />
                <FootText>Change Your Language</FootText>
              </div>
            </Footer>
          </Page>
          <Scrollbar><Arrow up /><Thumb /><Arrow /></Scrollbar>
        </Frame>
        <EdgeSide />
      </Middle>
      <Tasks />
    </Screen>
  );
}
